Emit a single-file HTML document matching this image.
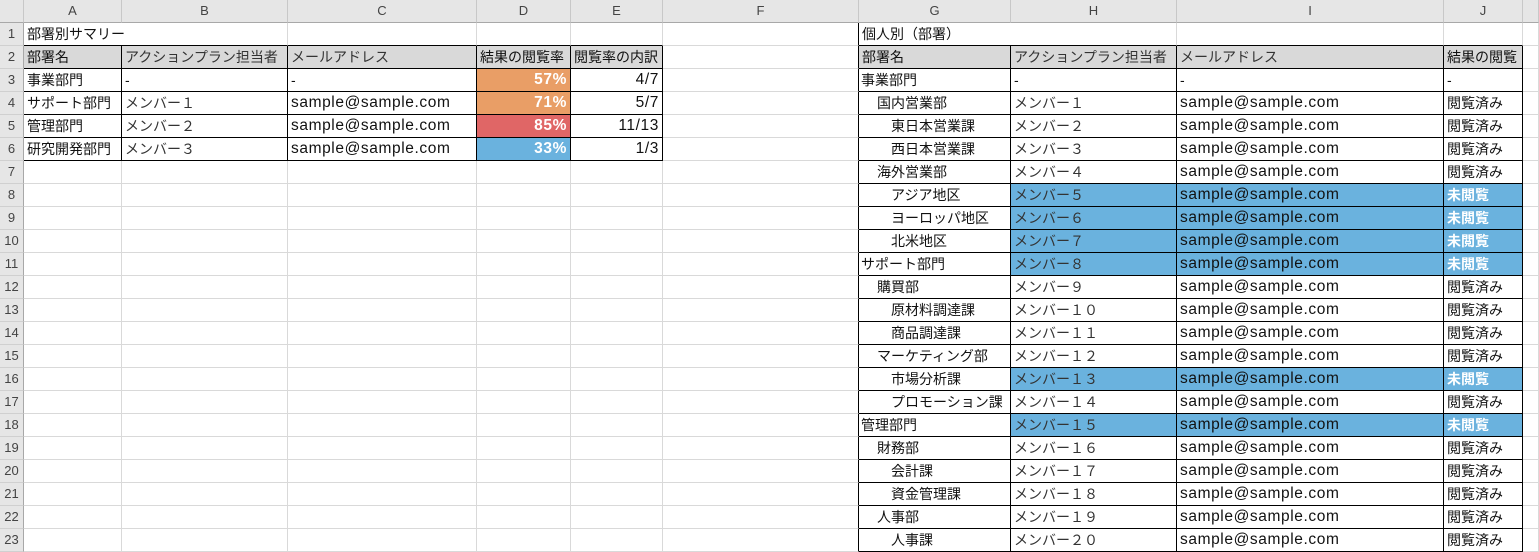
<!DOCTYPE html>
<html><head><meta charset="utf-8"><style>
body{margin:0;background:#fff;overflow:hidden;width:1539px;height:532px}
table{border-collapse:separate;border-spacing:0;table-layout:fixed;width:1539px;font-family:"Liberation Sans","Noto Sans CJK JP",sans-serif;font-size:14px;color:#111}
td{border-right:1px solid #d9d9d9;border-bottom:1px solid #d9d9d9;padding:0 3px;height:23px;box-sizing:border-box;white-space:nowrap;overflow:hidden;line-height:22px}
tr.h td{background:#e6e6e6;color:#444;text-align:center;font-size:13px;height:22px;border-right:1px solid #c8c8c8;border-bottom:1px solid #a8a8a8;padding:0}
td.n{background:#e6e6e6;color:#444;text-align:center;font-size:13px;padding:0;border-right:1px solid #a8a8a8;border-bottom:1px solid #d0d0d0}
.k{border-right:1px solid #000;border-bottom:1px solid #000}
.kr{border-right:1px solid #000}
.kb{border-bottom:1px solid #000}
.hd{background:#d9d9d9}
.r{text-align:right}
.e{font-size:15.5px;letter-spacing:.6px}
.o{background:#e99e66;color:#fff;font-weight:bold;text-align:right}
.rd{background:#e06666;color:#fff;font-weight:bold;text-align:right}
.bl{background:#6ab2de}
.w{color:#fff;font-weight:bold}
.g{color:#333}
.i1{padding-left:18px}.i2{padding-left:32px}
td.ov{overflow:visible}
</style></head><body>
<table>
<tr class="h"><td style="width:24px"></td><td style="width:98px">A</td><td style="width:166px">B</td><td style="width:189px">C</td><td style="width:94px">D</td><td style="width:92px">E</td><td style="width:196px">F</td><td style="width:152px">G</td><td style="width:166px">H</td><td style="width:267px">I</td><td style="width:79px">J</td><td style="width:16px"></td></tr>
<tr><td class="n">1</td><td class="ov kb" style="border-right:none">部署別サマリー</td><td class="kb"></td><td class="kb"></td><td class="kb"></td><td class="kb"></td><td class="kr"></td><td class="ov kb" style="border-right:none">個人別（部署）</td><td class="kb"></td><td class="kb"></td><td class="kb"></td><td></td></tr>
<tr><td class="n kr">2</td><td class="k hd">部署名</td><td class="k hd g">アクションプラン担当者</td><td class="k hd g">メールアドレス</td><td class="k hd">結果の閲覧率</td><td class="k hd">閲覧率の内訳</td><td class="kr"></td><td class="k hd">部署名</td><td class="k hd g">アクションプラン担当者</td><td class="k hd g">メールアドレス</td><td class="k hd">結果の閲覧</td><td></td></tr>
<tr><td class="n kr">3</td><td class="k">事業部門</td><td class="k">-</td><td class="k">-</td><td class="k o e">57%</td><td class="k r e">4/7</td><td class="kr"></td><td class="k" style="padding-left:2px">事業部門</td><td class="k">-</td><td class="k">-</td><td class="k">-</td><td></td></tr>
<tr><td class="n kr">4</td><td class="k">サポート部門</td><td class="k g">メンバー１</td><td class="k e">sample@sample.com</td><td class="k o e">71%</td><td class="k r e">5/7</td><td class="kr"></td><td class="k i1">国内営業部</td><td class="k g">メンバー１</td><td class="k e">sample@sample.com</td><td class="k">閲覧済み</td><td></td></tr>
<tr><td class="n kr">5</td><td class="k">管理部門</td><td class="k g">メンバー２</td><td class="k e">sample@sample.com</td><td class="k rd e">85%</td><td class="k r e">11/13</td><td class="kr"></td><td class="k i2">東日本営業課</td><td class="k g">メンバー２</td><td class="k e">sample@sample.com</td><td class="k">閲覧済み</td><td></td></tr>
<tr><td class="n kr">6</td><td class="k">研究開発部門</td><td class="k g">メンバー３</td><td class="k e">sample@sample.com</td><td class="k bl w r e">33%</td><td class="k r e">1/3</td><td class="kr"></td><td class="k i2">西日本営業課</td><td class="k g">メンバー３</td><td class="k e">sample@sample.com</td><td class="k">閲覧済み</td><td></td></tr>
<tr><td class="n">7</td><td></td><td></td><td></td><td></td><td></td><td class="kr"></td><td class="k i1">海外営業部</td><td class="k g">メンバー４</td><td class="k e">sample@sample.com</td><td class="k">閲覧済み</td><td></td></tr>
<tr><td class="n">8</td><td></td><td></td><td></td><td></td><td></td><td class="kr"></td><td class="k i2">アジア地区</td><td class="k bl g">メンバー５</td><td class="k bl e">sample@sample.com</td><td class="k bl w">未閲覧</td><td></td></tr>
<tr><td class="n">9</td><td></td><td></td><td></td><td></td><td></td><td class="kr"></td><td class="k i2">ヨーロッパ地区</td><td class="k bl g">メンバー６</td><td class="k bl e">sample@sample.com</td><td class="k bl w">未閲覧</td><td></td></tr>
<tr><td class="n">10</td><td></td><td></td><td></td><td></td><td></td><td class="kr"></td><td class="k i2">北米地区</td><td class="k bl g">メンバー７</td><td class="k bl e">sample@sample.com</td><td class="k bl w">未閲覧</td><td></td></tr>
<tr><td class="n">11</td><td></td><td></td><td></td><td></td><td></td><td class="kr"></td><td class="k" style="padding-left:2px">サポート部門</td><td class="k bl g">メンバー８</td><td class="k bl e">sample@sample.com</td><td class="k bl w">未閲覧</td><td></td></tr>
<tr><td class="n">12</td><td></td><td></td><td></td><td></td><td></td><td class="kr"></td><td class="k i1">購買部</td><td class="k g">メンバー９</td><td class="k e">sample@sample.com</td><td class="k">閲覧済み</td><td></td></tr>
<tr><td class="n">13</td><td></td><td></td><td></td><td></td><td></td><td class="kr"></td><td class="k i2">原材料調達課</td><td class="k g">メンバー１０</td><td class="k e">sample@sample.com</td><td class="k">閲覧済み</td><td></td></tr>
<tr><td class="n">14</td><td></td><td></td><td></td><td></td><td></td><td class="kr"></td><td class="k i2">商品調達課</td><td class="k g">メンバー１１</td><td class="k e">sample@sample.com</td><td class="k">閲覧済み</td><td></td></tr>
<tr><td class="n">15</td><td></td><td></td><td></td><td></td><td></td><td class="kr"></td><td class="k i1">マーケティング部</td><td class="k g">メンバー１２</td><td class="k e">sample@sample.com</td><td class="k">閲覧済み</td><td></td></tr>
<tr><td class="n">16</td><td></td><td></td><td></td><td></td><td></td><td class="kr"></td><td class="k i2">市場分析課</td><td class="k bl g">メンバー１３</td><td class="k bl e">sample@sample.com</td><td class="k bl w">未閲覧</td><td></td></tr>
<tr><td class="n">17</td><td></td><td></td><td></td><td></td><td></td><td class="kr"></td><td class="k i2">プロモーション課</td><td class="k g">メンバー１４</td><td class="k e">sample@sample.com</td><td class="k">閲覧済み</td><td></td></tr>
<tr><td class="n">18</td><td></td><td></td><td></td><td></td><td></td><td class="kr"></td><td class="k" style="padding-left:2px">管理部門</td><td class="k bl g">メンバー１５</td><td class="k bl e">sample@sample.com</td><td class="k bl w">未閲覧</td><td></td></tr>
<tr><td class="n">19</td><td></td><td></td><td></td><td></td><td></td><td class="kr"></td><td class="k i1">財務部</td><td class="k g">メンバー１６</td><td class="k e">sample@sample.com</td><td class="k">閲覧済み</td><td></td></tr>
<tr><td class="n">20</td><td></td><td></td><td></td><td></td><td></td><td class="kr"></td><td class="k i2">会計課</td><td class="k g">メンバー１７</td><td class="k e">sample@sample.com</td><td class="k">閲覧済み</td><td></td></tr>
<tr><td class="n">21</td><td></td><td></td><td></td><td></td><td></td><td class="kr"></td><td class="k i2">資金管理課</td><td class="k g">メンバー１８</td><td class="k e">sample@sample.com</td><td class="k">閲覧済み</td><td></td></tr>
<tr><td class="n">22</td><td></td><td></td><td></td><td></td><td></td><td class="kr"></td><td class="k i1">人事部</td><td class="k g">メンバー１９</td><td class="k e">sample@sample.com</td><td class="k">閲覧済み</td><td></td></tr>
<tr><td class="n">23</td><td></td><td></td><td></td><td></td><td></td><td class="kr"></td><td class="k i2">人事課</td><td class="k g">メンバー２０</td><td class="k e">sample@sample.com</td><td class="k">閲覧済み</td><td></td></tr>
</table>
</body></html>
